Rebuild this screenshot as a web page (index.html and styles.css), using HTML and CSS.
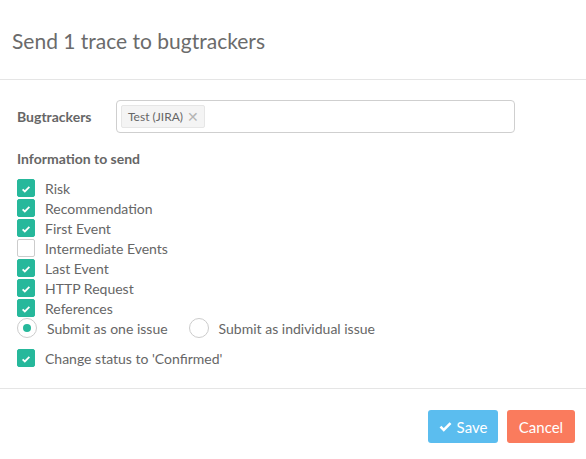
FILE: index.html
```html
<!DOCTYPE html>
<html>
<head>
<meta charset="utf-8">
<link rel="stylesheet" href="styles.css">
</head>
<body>
<div class="modal">
  <div class="header"><h1 class="title">Send 1 trace to bugtrackers</h1></div>
  <div class="body">
    <div class="field">
      <label class="label">Bugtrackers</label>
      <div class="select">
        <span class="tag">Test (JIRA) <span class="tag-x">✕</span></span>
      </div>
    </div>
    <div class="section">Information to send</div>
    <div class="checks">
      <div class="check"><span class="box on"><svg viewBox="0 0 18 18"><path d="M5.2 9.3l2.5 2.4L12.8 6.6" fill="none" stroke="#fff" stroke-width="2"/></svg></span>Risk</div>
      <div class="check"><span class="box on"><svg viewBox="0 0 18 18"><path d="M5.2 9.3l2.5 2.4L12.8 6.6" fill="none" stroke="#fff" stroke-width="2"/></svg></span>Recommendation</div>
      <div class="check"><span class="box on"><svg viewBox="0 0 18 18"><path d="M5.2 9.3l2.5 2.4L12.8 6.6" fill="none" stroke="#fff" stroke-width="2"/></svg></span>First Event</div>
      <div class="check"><span class="box"></span>Intermediate Events</div>
      <div class="check"><span class="box on"><svg viewBox="0 0 18 18"><path d="M5.2 9.3l2.5 2.4L12.8 6.6" fill="none" stroke="#fff" stroke-width="2"/></svg></span>Last Event</div>
      <div class="check"><span class="box on"><svg viewBox="0 0 18 18"><path d="M5.2 9.3l2.5 2.4L12.8 6.6" fill="none" stroke="#fff" stroke-width="2"/></svg></span>HTTP Request</div>
      <div class="check"><span class="box on"><svg viewBox="0 0 18 18"><path d="M5.2 9.3l2.5 2.4L12.8 6.6" fill="none" stroke="#fff" stroke-width="2"/></svg></span>References</div>
      <div class="radios">
        <div class="radio"><span class="circle on"></span>Submit as one issue</div>
        <div class="radio second"><span class="circle"></span>Submit as individual issue</div>
      </div>
      <div class="check status"><span class="box on"><svg viewBox="0 0 18 18"><path d="M5.2 9.3l2.5 2.4L12.8 6.6" fill="none" stroke="#fff" stroke-width="2"/></svg></span>Change status to 'Confirmed'</div>
    </div>
  </div>
  <div class="footer">
    <button class="btn save"><svg viewBox="0 0 14 12" class="btn-icon"><path d="M1.5 6.2l3.6 3.6L12.5 2.4" fill="none" stroke="#fff" stroke-width="2.8"/></svg>Save</button>
    <button class="btn cancel">Cancel</button>
  </div>
</div>
</body>
</html>
```
FILE: styles.css
```css
html, body { margin: 0; padding: 0; background: #fff; }
body { font-family: Lato, "Noto Sans", sans-serif; color: #666; }
.modal { width: 586px; }
.header { height: 80px; border-bottom: 1px solid #e5e5e5; display: flex; align-items: center; padding-left: 12px; box-sizing: border-box; }
.title { margin: 0; font-weight: 400; font-size: 21px; color: #6b6b6b; position: relative; top: 1px; }
.body { padding: 20px 17px 0 17px; height: 309px; box-sizing: border-box; border-bottom: 1px solid #e5e5e5; }
.field { display: flex; align-items: center; }
.label { font-weight: 700; font-size: 14px; width: 99px; color: #666; }
.select { width: 399px; height: 33px; border: 1px solid #cfcfcf; border-radius: 4px; box-sizing: border-box; padding: 4px; display: flex; align-items: center; }
.tag { background: #f4f4f4; border: 1px solid #e6e6e6; border-radius: 2px; height: 23px; box-sizing: border-box; padding: 0 5px 0 6px; display: flex; align-items: center; font-size: 12px; color: #666; gap: 4px; }
.tag-x { color: #b5b5b5; font-size: 14px; }
.section { font-weight: 700; font-size: 14px; margin-top: 17px; color: #666; }
.checks { margin-top: 11px; }
.check { display: flex; align-items: center; height: 20px; font-size: 14px; color: #666; }
.box { width: 18px; height: 18px; box-sizing: border-box; border: 1px solid #ccc; border-radius: 2px; margin-right: 10px; display: flex; }
.box.on { background: #26b89b; border-color: #26b89b; }
.box svg { width: 18px; height: 18px; }
.radios { display: flex; align-items: center; height: 20px; font-size: 14px; }
.radio { display: flex; align-items: center; }
.radio.second { margin-left: 21px; }
.circle { width: 20px; height: 20px; border: 1px solid #ccc; border-radius: 50%; box-sizing: border-box; margin-right: 10px; display: flex; align-items: center; justify-content: center; }
.circle.on::after { content: ""; width: 8px; height: 8px; border-radius: 50%; background: #26b89b; }
.check.status { margin-top: 10px; }
.footer { display: flex; justify-content: flex-end; padding: 21px 11px 0 0; gap: 9px; }
.btn { font-family: Lato, "Noto Sans", sans-serif; font-size: 15px; color: #fff; border: none; border-radius: 3px; height: 33px; display: flex; align-items: center; justify-content: center; padding: 0; }
.save { width: 70px; background: #5bbdef; }
.cancel { width: 68px; background: #fa7b5d; }
.btn-icon { width: 13px; height: 11px; margin-right: 5px; }
```
